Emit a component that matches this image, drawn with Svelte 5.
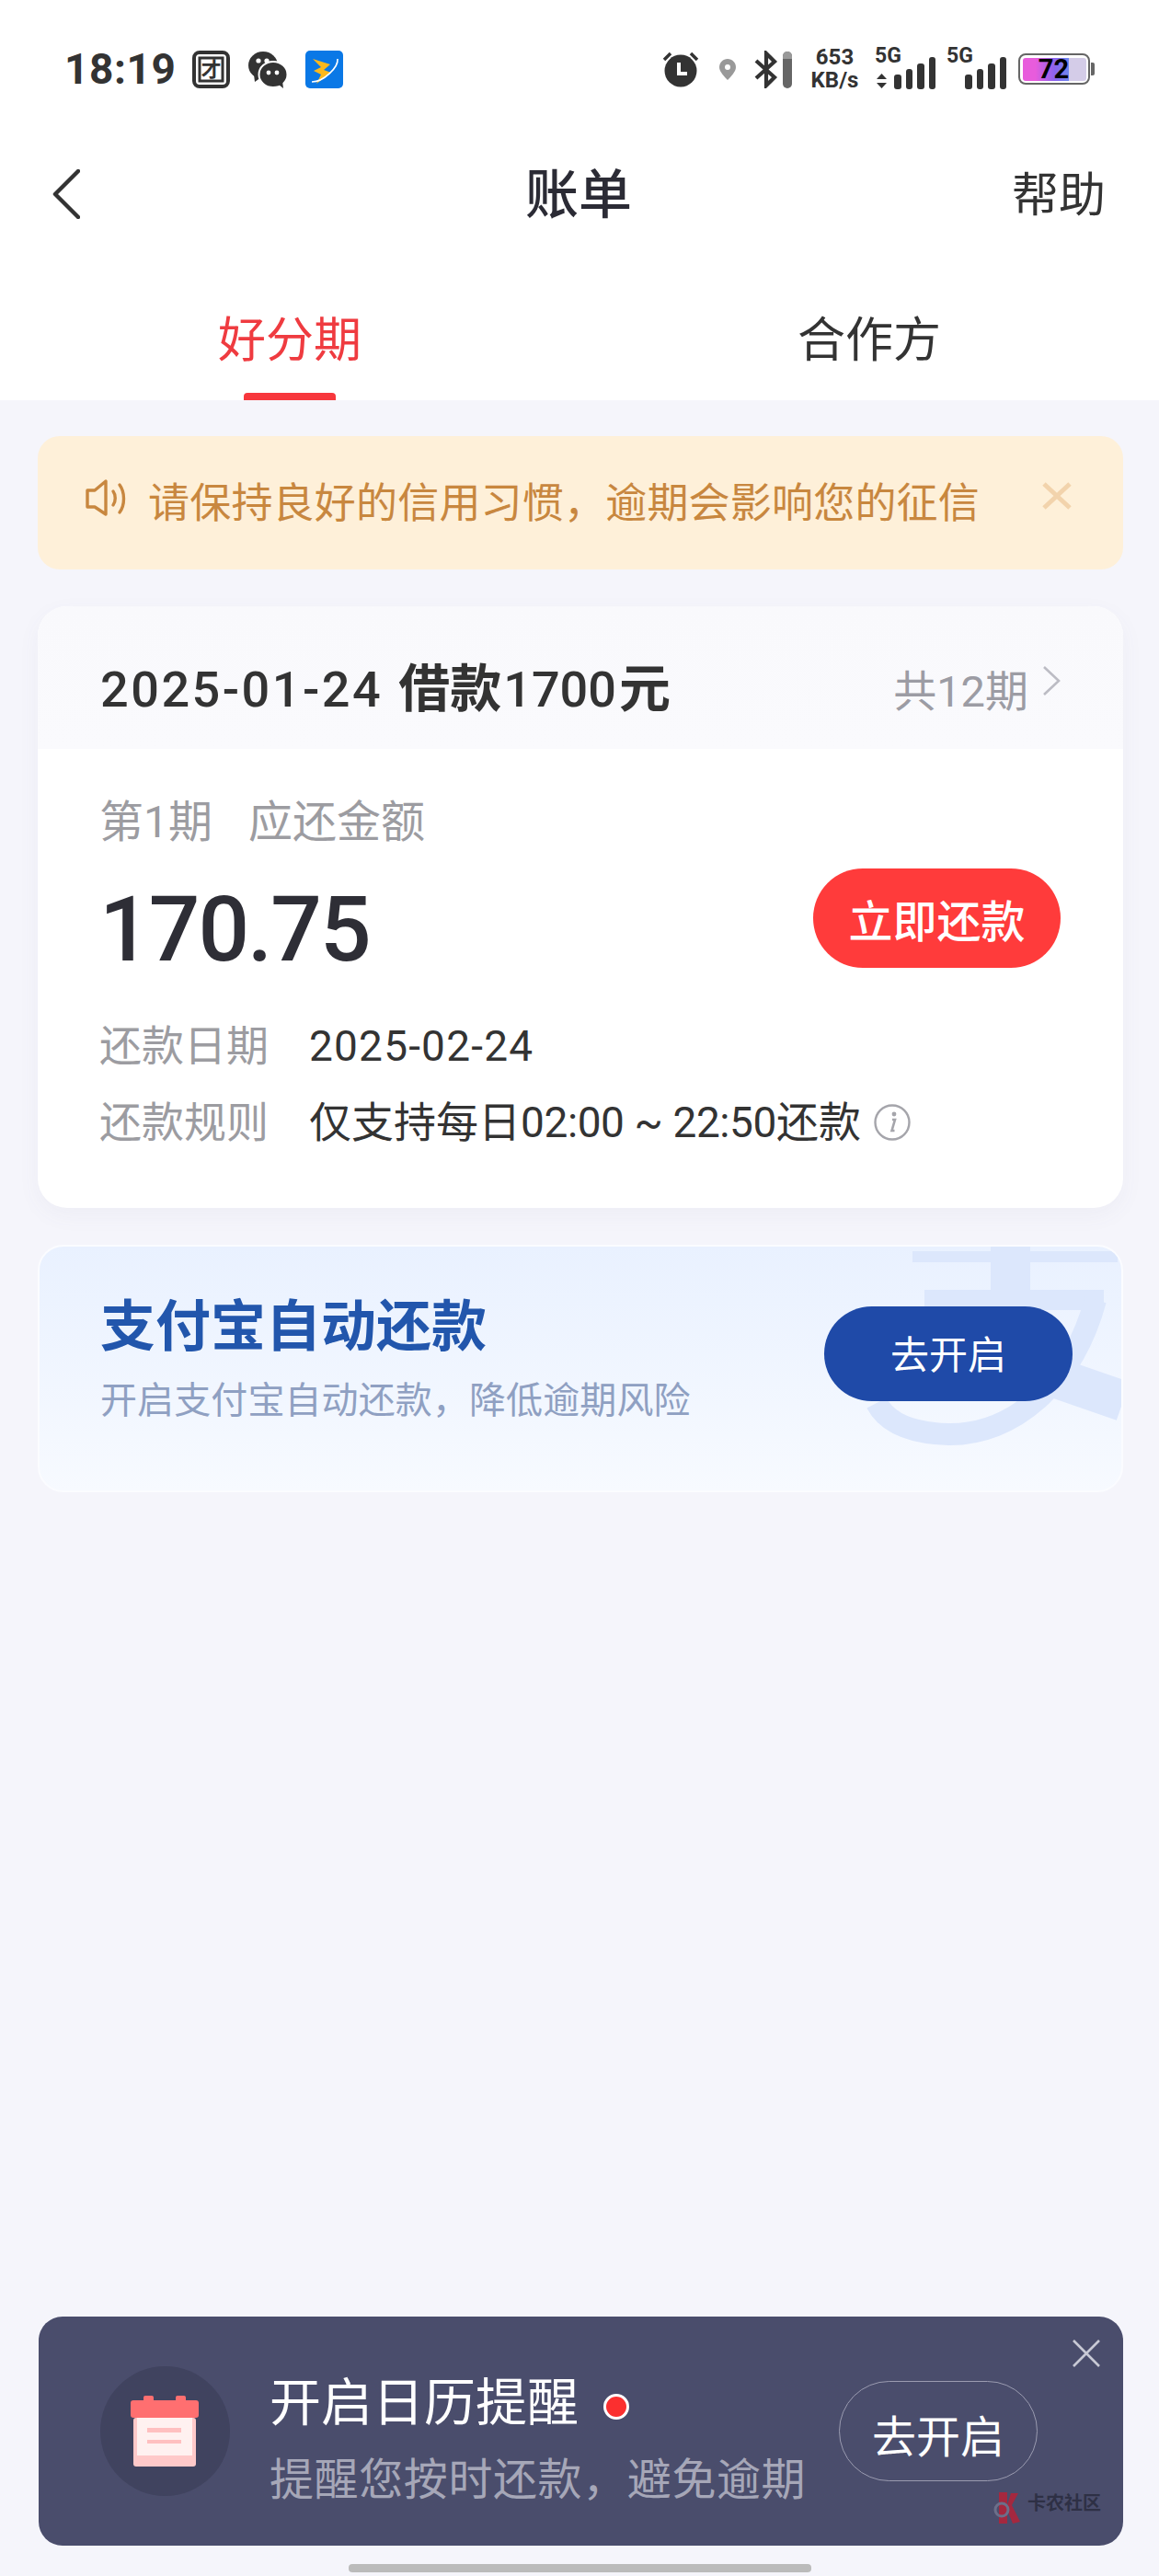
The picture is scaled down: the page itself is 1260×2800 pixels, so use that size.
<script>
  const signal = [16, 22, 28, 35];
</script>

<div class="page">
  <div class="status">
    <span class="time">18:19</span>
    <svg class="si first" width="41" height="41" viewBox="0 0 41 41">
      <rect x="2" y="2" width="37" height="37" rx="6" fill="#fff" stroke="#333" stroke-width="4"/>
      <rect x="8" y="8" width="25" height="25" fill="none" stroke="#333" stroke-width="3"/>
      <text x="20.5" y="28" text-anchor="middle" class="tuan">才</text>
    </svg>
    <svg class="si wx" width="42" height="41" viewBox="0 0 42 41">
      <ellipse cx="16" cy="16" rx="16" ry="15" fill="#333"/>
      <path d="M6 26 L7 34 L14 29 Z" fill="#333"/>
      <ellipse cx="27" cy="26" rx="15.5" ry="14" fill="#333" stroke="#fff" stroke-width="2"/>
      <path d="M33 37 L38 41 L37 33 Z" fill="#333"/>
      <circle cx="11" cy="11" r="2.6" fill="#fff"/><circle cx="20" cy="11" r="2.6" fill="#fff"/>
      <circle cx="22" cy="24" r="2.4" fill="#fff"/><circle cx="31" cy="24" r="2.4" fill="#fff"/>
    </svg>
    <svg class="si app" width="41" height="41" viewBox="0 0 41 41">
      <rect width="41" height="41" rx="5" fill="#0a78e6"/>
      <path d="M8 9 L27 15 L20 21 L28 24 L12 36 L17 26 L9 22 L17 18 Z" fill="#fbb81c"/>
      <path d="M7 34 C20 34 36 18 35 9" fill="none" stroke="#fff" stroke-width="1.6"/>
    </svg>

    <div class="status-right">
      <svg width="40" height="40" viewBox="0 0 40 40">
        <circle cx="20" cy="22" r="17.5" fill="#333"/>
        <path d="M2 10 L9 3 M38 10 L31 3" stroke="#333" stroke-width="3.5"/>
        <path d="M18 13 V25 H27" fill="none" stroke="#fff" stroke-width="4"/>
      </svg>
      <svg class="pin" width="18" height="23" viewBox="0 0 18 23">
        <path d="M9 0 C4 0 0 4 0 9 C0 14 6 20 9 23 C12 20 18 14 18 9 C18 4 14 0 9 0 Z" fill="#999"/>
        <circle cx="9" cy="9" r="3" fill="#fff"/>
      </svg>
      <svg class="bt" width="42" height="41" viewBox="0 0 42 41">
        <path d="M2 11 L22 29 L13 38 V3 L22 12 L2 30" fill="none" stroke="#333" stroke-width="4.2"/>
        <rect x="31" y="1" width="10" height="40" rx="5" fill="#666"/>
        <path d="M31 9 V6 a5 5 0 0 1 10 0 V9 Z" fill="#999"/>
      </svg>
      <div class="speed"><span>653</span><span>KB/s</span></div>
      <div class="net one">
        <span class="g">5G</span>
        <svg class="arrows" width="11" height="16" viewBox="0 0 11 16"><path d="M5.5 0 L11 6 H0 Z M5.5 16 L0 10 H11 Z" fill="#333"/></svg>
        <div class="bars">{#each signal as h}<i style="height:{h}px"></i>{/each}</div>
      </div>
      <div class="net two">
        <span class="g">5G</span>
        <div class="bars">{#each signal as h}<i style="height:{h}px"></i>{/each}</div>
      </div>
      <div class="battery">
        <div class="cell"><span class="lvl"><b>72</b></span></div>
        <i class="nub"></i>
      </div>
    </div>
  </div>

  <div class="nav">
    <svg width="30" height="54" viewBox="0 0 30 54"><path d="M28 2 L3 27 L28 52" fill="none" stroke="#333" stroke-width="4.5" stroke-linecap="round" stroke-linejoin="round"/></svg>
    <div class="title">账单</div>
    <div class="help">帮助</div>
  </div>

  <div class="tabs">
    <div class="tab active"><span>好分期</span><i></i></div>
    <div class="tab"><span>合作方</span></div>
  </div>

  <main>
    <div class="notice">
      <svg width="46" height="42" viewBox="0 0 46 42" fill="none" stroke="#c8873f" stroke-width="3.4" stroke-linejoin="round" stroke-linecap="round">
        <path d="M2 12 H10 L22 2 V38 L10 30 H2 Z"/>
        <path d="M30 13 C33 17 33 24 30 28"/>
        <path d="M37 6 C43 14 43 28 37 36"/>
      </svg>
      <span>请保持良好的信用习惯，逾期会影响您的征信</span>
      <svg class="nclose" width="32" height="30" viewBox="0 0 32 30"><path d="M2 2 L30 28 M30 2 L2 28" stroke="#f2d3ac" stroke-width="5"/></svg>
    </div>

    <section class="card">
      <div class="card-head">
        <div class="loan"><span class="d">2025-01-24</span><span class="cn">借款</span><span class="n">1700</span><span class="yuan">元</span></div>
        <div class="total">
          <span>共12期</span>
          <svg width="22" height="34" viewBox="0 0 22 34"><path d="M3 2 L19 17 L3 32" fill="none" stroke="#bcbcc4" stroke-width="2.6"/></svg>
        </div>
      </div>
      <div class="card-body">
        <div class="muted due"><span>第1期</span><span>应还金额</span></div>
        <div class="amount-row">
          <div class="amount">170.75</div>
          <div class="pay">立即还款</div>
        </div>
        <div class="line first-line"><span class="muted">还款日期</span><span class="val date">2025-02-24</span></div>
        <div class="line"><span class="muted">还款规则</span><span class="val">仅支持每日<span class="clock">02:00 ~ 22:50</span>还款</span>
          <svg class="info" width="40" height="40" viewBox="0 0 40 40">
            <circle cx="20" cy="20" r="18.5" fill="none" stroke="#a5a5ab" stroke-width="2.4"/>
            <circle cx="22" cy="11" r="2.4" fill="#a5a5ab"/>
            <path d="M20 17 H23 L19.5 29 H22.5" fill="none" stroke="#a5a5ab" stroke-width="2.6"/>
          </svg>
        </div>
      </div>
    </section>

    <section class="ali">
      <svg class="mark" width="280" height="266" viewBox="0 0 280 266" fill="none" stroke="#dce7fc">
        <path d="M51 11 H274" stroke-width="12"/>
        <path d="M157.500 0 V50" stroke-width="43"/>
        <path d="M64 58 H259" stroke-width="22"/>
        <path d="M250 58 C225 150 160 205 90 204 C55 203 25 195 12 170" stroke-width="24"/>
        <path d="M205 142 L280 168" stroke-width="44"/>
      </svg>
      <div class="ali-text">
        <div class="ali-title">支付宝自动还款</div>
        <div class="ali-sub">开启支付宝自动还款，降低逾期风险</div>
      </div>
      <div class="ali-btn"><span>去开启</span></div>
    </section>
  </main>

  <section class="banner">
    <div class="badge">
      <svg width="76" height="78" viewBox="0 0 76 78">
        <rect x="14" y="0" width="11" height="8" rx="2" fill="#ff6f70"/>
        <rect x="49" y="0" width="11" height="8" rx="2" fill="#ff6f70"/>
        <rect x="3" y="24" width="68" height="53" rx="3" fill="#ffc9c9"/>
        <rect x="7" y="24" width="60" height="41" fill="#fff1f0"/>
        <rect x="0" y="5" width="74" height="19" rx="3" fill="#ff6f70"/>
        <rect x="18" y="35" width="37" height="5" fill="#ffc0c0"/>
        <rect x="18" y="48" width="37" height="4" fill="#ffc0c0"/>
      </svg>
    </div>
    <div class="b-text">
      <div class="b-title">开启日历提醒<i class="dot"></i></div>
      <div class="b-sub">提醒您按时还款，避免逾期</div>
    </div>
    <div class="b-btn"><span>去开启</span></div>
    <svg class="b-close" width="30" height="30" viewBox="0 0 30 30"><path d="M1 1 L29 29 M29 1 L1 29" stroke="#c8c9d5" stroke-width="2.6"/></svg>
    <div class="wm">
      <svg width="34" height="36" viewBox="0 0 34 36">
        <path d="M6 1 H15 V35 H6 Z M19 2 L27 2 L20 15 L29 33 L21 35 L14 18 Z" fill="#a5283f"/>
        <circle cx="9" cy="20" r="7" fill="none" stroke="#6c6f8a" stroke-width="3"/>
      </svg>
      <span>卡农社区</span>
    </div>
  </section>

  <div class="homebar-wrap"><div class="homebar"></div></div>
</div>

<style>
  :global(body) {
    margin: 0;
    background: #f5f5fb;
  }
  .page {
    width: 1260px;
    height: 2800px;
    display: flex;
    flex-direction: column;
    background: #f5f5fb;
    font-family: Roboto, "Noto Sans CJK SC", sans-serif;
    color: #333;
    overflow: hidden;
  }
  .status {
    height: 150px;
    background: #fff;
    display: flex;
    align-items: center;
    padding: 0 70px;
    box-sizing: border-box;
  }
  .time {
    font-size: 46px;
    font-weight: 700;
    line-height: 50px;
    color: #333;
    width: 118px;
    letter-spacing: 0.6px;
    white-space: nowrap;
  }
  .si { flex: none; }
  .si.first { margin-left: 21px; }
  .si.wx { margin-left: 20px; }
  .si.app { margin-left: 20px; }
  .tuan { font-size: 22px; font-weight: 700; fill: #333; font-family: "Noto Sans CJK SC", sans-serif; }
  .status-right {
    margin-left: auto;
    display: flex;
    align-items: center;
    width: 470px;
  }
  .pin { margin-left: 22px; }
  .bt { margin-left: 20px; }
  .speed {
    margin-left: 17px;
    display: flex;
    flex-direction: column;
    align-items: center;
    font-size: 24px;
    font-weight: 700;
    line-height: 25px;
    width: 57px;
  }
  .net {
    position: relative;
    height: 44px;
    margin-left: 16px;
  }
  .net.one { width: 65px; }
  .net.two { width: 64px; margin-left: 13px; }
  .g {
    position: absolute;
    left: -1px;
    top: -3px;
    font-size: 23px;
    line-height: 22px;
    font-weight: 700;
  }
  .arrows { position: absolute; left: 1px; top: 27px; }
  .bars {
    position: absolute;
    right: 0;
    bottom: 0;
    display: flex;
    align-items: flex-end;
    gap: 5px;
  }
  .bars i {
    display: block;
    width: 7.500px;
    background: #333;
    border-radius: 3px;
  }
  .battery {
    margin-left: 13px;
    display: flex;
    align-items: center;
    gap: 1px;
  }
  .cell {
    width: 78px;
    height: 34px;
    box-sizing: border-box;
    border: 2.5px solid #666;
    border-radius: 8px;
    padding: 2.5px;
    background: #fff;
  }
  .lvl {
    display: block;
    height: 100%;
    border-radius: 3px;
    background: linear-gradient(90deg, #e85cdc 0 20%, #8b63ee 50%, #6f86ee 72%, #d4cce8 72%);
    text-align: center;
    position: relative;
  }
  .lvl b {
    position: absolute;
    left: 14px;
    width: 40px;
    top: -2px;
    font-size: 29px;
    line-height: 28px;
    color: #000;
    font-weight: 700;
  }
  .nub { width: 4px; height: 14px; background: #666; border-radius: 0 2px 2px 0; display: block; }

  .nav {
    height: 122px;
    background: #fff;
    display: flex;
    align-items: center;
    justify-content: space-between;
    padding: 0 58px 0 57px;
    position: relative;
  }
  .title { font-size: 58px; line-height: 70px; font-weight: 500; color: #2b2b35; position: absolute; left: 571px; top: 27px; }
  .help { font-size: 51px; line-height: 70px; color: #333; margin-left: auto; padding-top: 3px; }
  .tabs {
    height: 163px;
    background: #fff;
    display: grid;
    grid-template-columns: 1fr 1fr;
  }
  .tab {
    display: flex;
    flex-direction: column;
    align-items: center;
    padding-top: 63px;
    font-size: 52px;
    line-height: 72px;
    color: #333;
  }
  .tab.active { color: #ef3b40; }
  .tab i {
    display: block;
    width: 100px;
    height: 8px;
    margin-top: 20px;
    background: #f7373c;
    border-radius: 4px 4px 0 0;
  }
  main {
    flex: 1;
    padding: 39px 39px 0 41px;
    display: flex;
    flex-direction: column;
  }
  .notice {
    height: 145px;
    margin-bottom: 40px;
    border-radius: 24px;
    background: #fef0d9;
    display: flex;
    align-items: center;
    padding: 0 56px 0 52px;
    color: #c8873f;
    font-size: 45px;
    line-height: 60px;
    box-sizing: border-box;
  }
  .notice > svg:first-child { margin-bottom: 10px; flex: none; }
  .notice span { margin-left: 22px; white-space: nowrap; padding-top: 3px; letter-spacing: 0.200px; }
  .nclose { margin-left: auto; margin-bottom: 16px; }
  .card {
    height: 654px;
    margin-bottom: 40px;
    border-radius: 32px;
    background: #fff;
    box-shadow: 0 8px 24px rgba(90, 90, 130, 0.05);
    overflow: hidden;
  }
  .card-head {
    height: 155px;
    box-sizing: border-box;
    padding: 26px 67px 0 68px;
    display: flex;
    align-items: center;
    justify-content: space-between;
    background: linear-gradient(180deg, #f9f9fc, #fafafd);
  }
  .loan {
    display: flex;
    align-items: baseline;
    font-size: 54px;
    line-height: 70px;
    color: #333;
    white-space: nowrap;
  }
  .d { letter-spacing: 2.500px; font-weight: 500; }
  .cn, .yuan { font-size: 56px; font-weight: 700; }
  .cn { margin-left: 17px; }
  .n { font-weight: 500; margin-left: 2px; }
  .yuan { margin-left: 3px; }
  .total {
    display: flex;
    align-items: center;
    font-size: 47px;
    line-height: 60px;
    color: #9c9ca4;
    gap: 14px;
    padding-top: 5px;
  }
  .total svg { margin-bottom: 25px; }
  .card-body { padding: 50px 68px 0 67px; }
  .muted { color: #9c9ca1; font-size: 46px; line-height: 60px; white-space: nowrap; }
  .due { display: flex; gap: 39px; font-size: 48px; }
  .amount-row {
    margin-top: 20px;
    height: 108px;
    display: flex;
    align-items: center;
    justify-content: space-between;
  }
  .amount {
    font-size: 98px;
    font-weight: 500;
    line-height: 100px;
    color: #2e2e36;
    letter-spacing: -2px;
    padding-top: 26px;
  }
  .pay {
    width: 269px;
    height: 108px;
    border-radius: 54px;
    background: #ff3b3b;
    color: #fff;
    font-size: 48px;
    font-weight: 500;
    display: flex;
    align-items: center;
    justify-content: center;
  }
  .line {
    margin-top: 23px;
    display: flex;
    align-items: center;
    line-height: 60px;
    white-space: nowrap;
  }
  .first-line { margin-top: 55px; }
  .val { margin-left: 44px; font-size: 46px; color: #333; }
  .date { letter-spacing: 1.200px; }
  .clock { letter-spacing: -0.400px; }
  .info { margin-left: 14px; flex: none; }

  .ali {
    position: relative;
    height: 269px;
    box-sizing: border-box;
    border-radius: 28px;
    border: 2px solid #fbfcff;
    background: linear-gradient(180deg, #e9f1ff 0%, #f7faff 100%);
    display: flex;
    align-items: center;
    justify-content: space-between;
    padding: 0 53px 0 66px;
    overflow: hidden;
  }
  .mark { position: absolute; right: -2px; top: 0; }
  .ali-text { position: relative; margin-bottom: 22px; }
  .ali-title { font-size: 60px; line-height: 76px; font-weight: 700; color: #2256ac; white-space: nowrap; }
  .ali-sub { font-size: 40px; line-height: 50px; margin-top: 17px; color: #8fa0c2; white-space: nowrap; letter-spacing: 0.100px; }
  .ali-btn {
    position: relative;
    width: 270px;
    height: 103px;
    border-radius: 52px;
    background: #1f4aa8;
    color: #fff;
    font-size: 42px;
    display: flex;
    align-items: center;
    justify-content: center;
    margin-bottom: 32px;
  }
  .ali-btn span { padding-bottom: 5px; }

  .banner {
    position: relative;
    height: 249px;
    margin: 0 39px 20px 42px;
    border-radius: 26px;
    background: #4a4d6c;
    display: flex;
    align-items: center;
    padding-left: 67px;
    box-sizing: border-box;
    color: #fff;
  }
  .badge {
    width: 141px;
    height: 141px;
    border-radius: 50%;
    background: #40435f;
    display: flex;
    align-items: center;
    justify-content: center;
    flex: none;
  }
  .b-text { margin-left: 43px; width: 578px; padding-top: 18px; }
  .b-title { font-size: 56px; line-height: 70px; display: flex; align-items: center; white-space: nowrap; }
  .dot {
    display: block;
    width: 22px;
    height: 22px;
    margin-left: 27px;
    margin-top: 8px;
    background: #fb2f2f;
    border: 3px solid #fff;
    border-radius: 50%;
  }
  .b-sub { font-size: 48px; line-height: 60px; margin-top: 19px; color: #a6a7b8; white-space: nowrap; letter-spacing: 0.600px; }
  .b-btn {
    margin-left: 41px;
    width: 216px;
    height: 109px;
    box-sizing: border-box;
    border: 1.5px solid #9a9bb0;
    border-radius: 55px;
    font-size: 48px;
    display: flex;
    align-items: center;
    justify-content: center;
    flex: none;
  }
  .b-btn span { padding-top: 5px; }
  .b-close { position: absolute; top: 25px; right: 25px; }
  .wm {
    position: absolute;
    left: 1038px;
    bottom: 18px;
    display: flex;
    align-items: center;
    gap: 3px;
    font-size: 20px;
    line-height: 36px;
    color: #2e3045;
    font-weight: 700;
    white-space: nowrap;
  }
  .wm span { margin-bottom: 10px; }
  .homebar-wrap { height: 13px; display: flex; justify-content: center; }
  .homebar { width: 503px; height: 9px; border-radius: 4px; background: #bbb; }
</style>
